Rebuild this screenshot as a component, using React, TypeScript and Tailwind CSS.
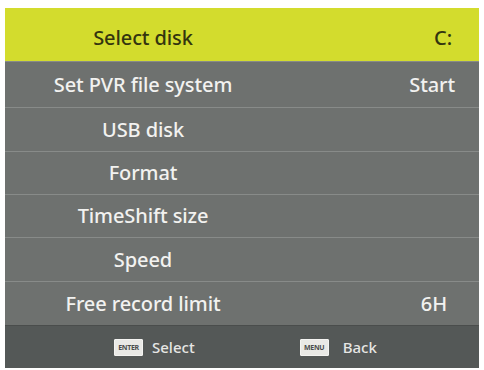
import React from 'react';

interface MenuRow {
  label: string;
  value?: string;
  height: string;
  pad?: string;
}

const rows: MenuRow[] = [
  { label: 'Set PVR file system', value: 'Start', height: 'h-[46px]', pad: 'pr-[24px]' },
  { label: 'USB disk', height: 'h-[44px]' },
  { label: 'Format', height: 'h-[43px]' },
  { label: 'TimeShift size', height: 'h-[43px]' },
  { label: 'Speed', height: 'h-[44px]' },
  { label: 'Free record limit', value: '6H', height: 'h-[44px]', pad: 'pr-[32px]' },
];

const KeyCap: React.FC<{ text: string }> = ({ text }) => (
  <span className="inline-flex items-center justify-center w-[29px] h-[17px] bg-[#e9e9e6] border border-[#f4f4f2] rounded-[1px] text-[7px] leading-none font-bold tracking-tighter text-[#4a4d4c]">
    {text}
  </span>
);

export default function App() {
  return (
    <div
      className="w-[484px] h-[370px] bg-white pt-[8px] pl-[5px] overflow-hidden"
      style={{ fontFamily: '"Noto Sans", "Open Sans", sans-serif' }}
    >
      <div className="w-[474px] flex flex-col">
        {/* highlighted row */}
        <div className="h-[53px] bg-[#d3dc2d] flex items-center pt-[6px] text-[20px] font-medium tracking-[-0.1px] text-[#33350f]">
          <div className="w-[276px] text-center">Select disk</div>
          <div className="flex-1 flex justify-end pr-[27px]">C:</div>
        </div>

        {rows.map((row) => (
          <div
            key={row.label}
            className={`${row.height} bg-[#6e716f] border-t border-[#888b89] flex items-center text-[20px] font-medium tracking-[-0.1px] text-[#f2f2f0]`}
          >
            <div className="w-[276px] text-center">{row.label}</div>
            <div className={`flex-1 flex justify-end ${row.pad ?? ''}`}>{row.value}</div>
          </div>
        ))}

        {/* footer */}
        <div className="h-[43px] bg-[#545857] border-t border-[#4a4d4c] flex items-center text-[15px] font-medium text-[#e6e6e4]">
          <div className="flex items-center gap-[9px] ml-[109px]">
            <KeyCap text="ENTER" />
            <span>Select</span>
          </div>
          <div className="flex items-center gap-[14px] ml-[105px]">
            <KeyCap text="MENU" />
            <span>Back</span>
          </div>
        </div>
      </div>
    </div>
  );
}
